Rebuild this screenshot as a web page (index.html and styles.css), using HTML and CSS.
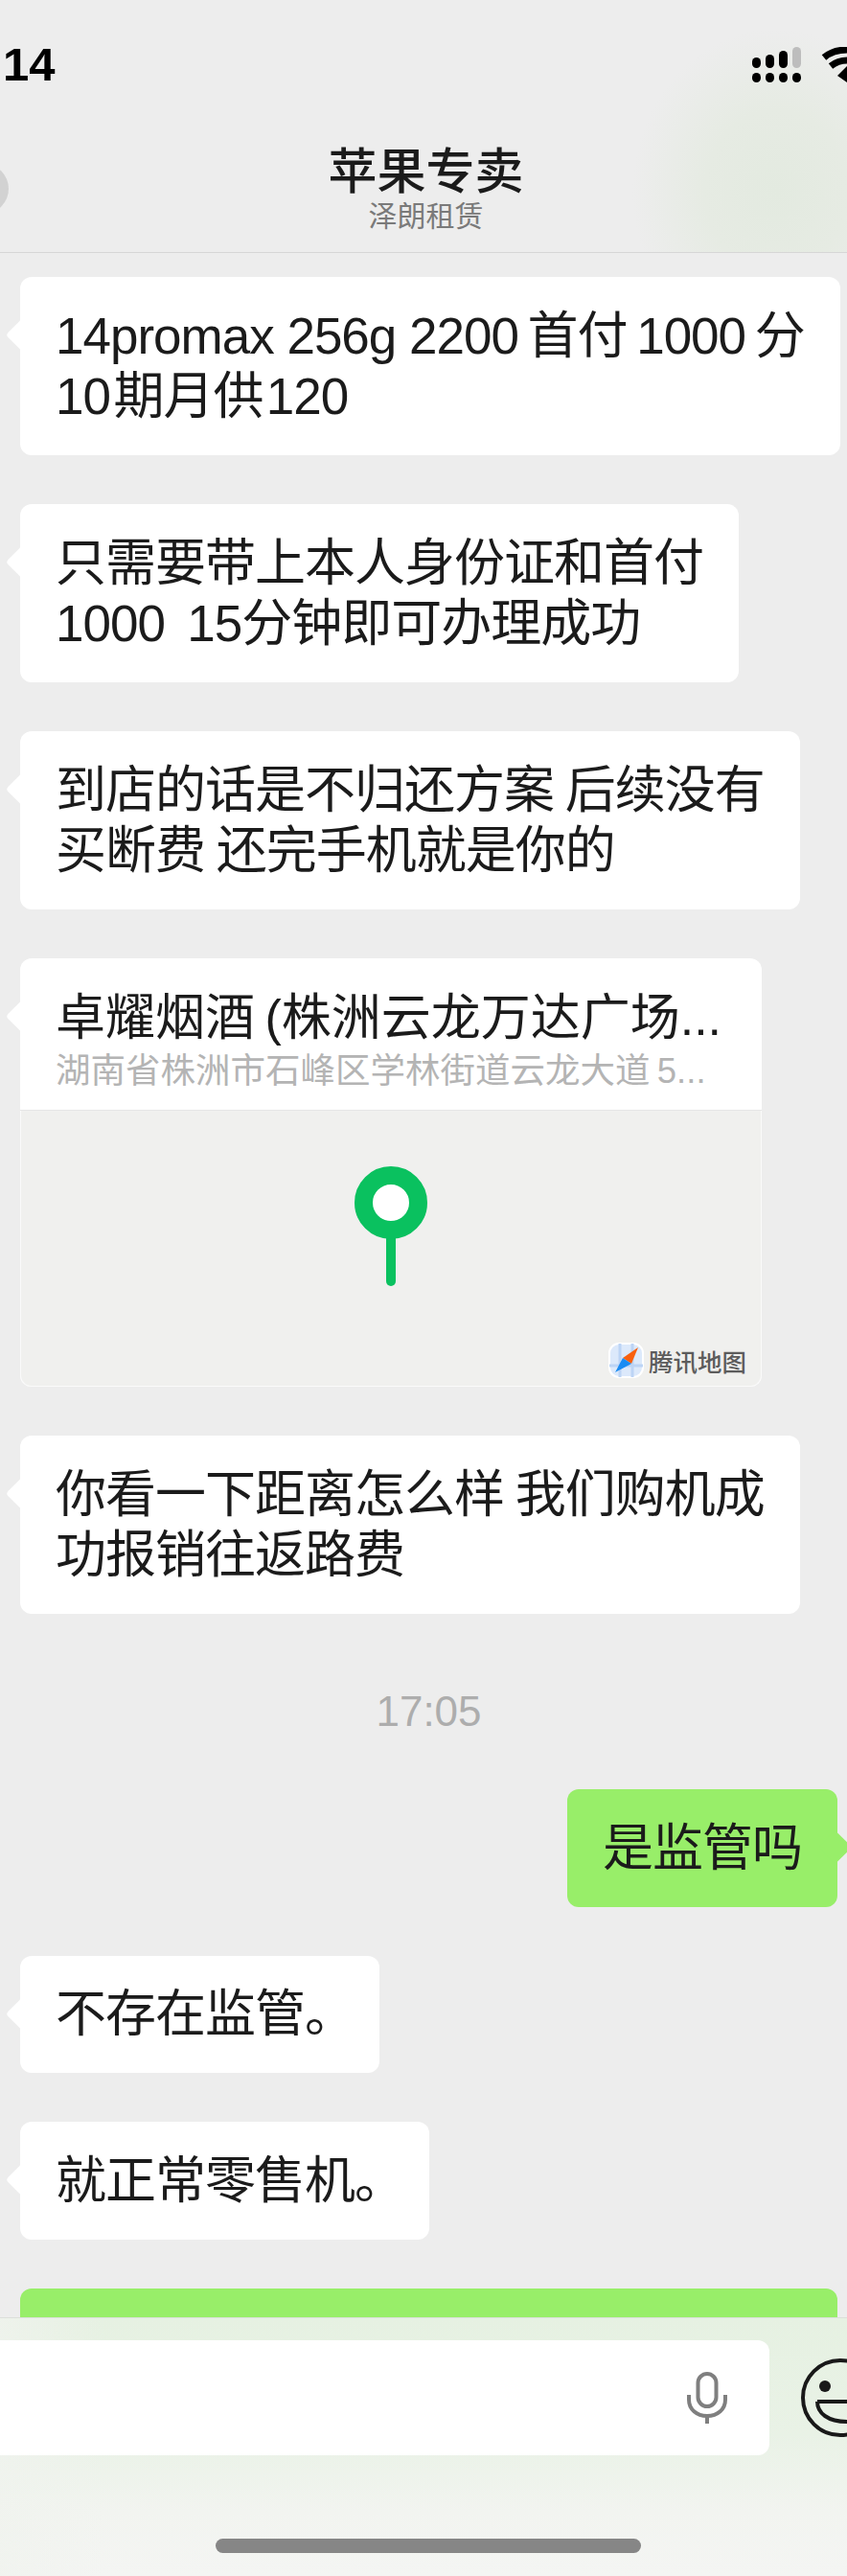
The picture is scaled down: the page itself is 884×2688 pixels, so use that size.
FILE: index.html
```html
<!DOCTYPE html>
<html lang="zh-CN">
<head>
    <meta charset="UTF-8">
    <meta name="viewport" content="width=device-width, initial-scale=1.0">
    <title>苹果专卖</title>
    <link rel="stylesheet" href="styles.css">
</head>
<body>
    <div id="phone">
        <div id="top">
            <div class="status">
                <span class="clock">14</span>
                <div class="status-icons">
                    <svg class="signal" width="51" height="37" viewBox="0 0 51 37">
                        <rect x="0" y="11" width="9" height="11" rx="4.5" fill="#000"/>
                        <rect x="14" y="8" width="9" height="14" rx="4.5" fill="#000"/>
                        <rect x="28" y="4" width="9" height="18" rx="4.5" fill="#000"/>
                        <rect x="42" y="0" width="9" height="22" rx="4.5" fill="#bdbdbd"/>
                        <rect x="0" y="27" width="9" height="10" rx="4.5" fill="#000"/>
                        <rect x="14" y="27" width="9" height="10" rx="4.5" fill="#000"/>
                        <rect x="28" y="27" width="9" height="10" rx="4.5" fill="#000"/>
                        <rect x="42" y="27" width="9" height="10" rx="4.5" fill="#000"/>
                    </svg>
                    <svg class="wifi" width="27" height="37" viewBox="0 0 27 37">
                        <path d="M3 11 C10 5 18 3 27 3" fill="none" stroke="#000" stroke-width="7"/>
                        <path d="M10 20 C15 16 20 14 27 14" fill="none" stroke="#000" stroke-width="7"/>
                        <path d="M17 30 L27 20 L27 37 Z" fill="#000"/>
                    </svg>
                </div>
            </div>
            <div class="title-block">
                <div class="title">苹果专卖</div>
                <div class="subtitle">泽朗租赁</div>
            </div>
        </div>

        <div id="chat">
            <div class="bubble roomy">14promax 256g 2200&thinsp;首付&thinsp;1000&thinsp;分<br>10&#8202;期月供&#8202;120</div>
            <div class="bubble">只需要带上本人身份证和首付<br>1000&nbsp; 15分钟即可办理成功</div>
            <div class="bubble">到店的话是不归还方案 后续没有<br>买断费 还完手机就是你的</div>

            <div class="location">
                <div class="location-text">
                    <div class="location-name">卓耀烟酒&thinsp;(株洲云龙万达广场...</div>
                    <div class="location-address">湖南省株洲市石峰区学林街道云龙大道&thinsp;5...</div>
                </div>
                <div class="map">
                    <svg class="pin" width="76" height="125" viewBox="0 0 76 125">
                        <rect x="33" y="70" width="10" height="55" rx="5" fill="#0ac15f"/>
                        <circle cx="38" cy="38" r="28.5" fill="#fff" stroke="#0ac15f" stroke-width="19"/>
                    </svg>
                    <div class="map-brand">
                        <svg width="37" height="37" viewBox="0 0 37 37">
                            <rect x="1" y="1" width="35" height="35" rx="10" fill="#dce9fb" stroke="#fff" stroke-width="2"/>
                            <path d="M12 1 V36 M25 1 V36 M1 24 H36" stroke="#bcd4f5" stroke-width="3"/>
                            <path d="M31 5 L24 22 L15 16 Z" fill="#f8600f"/>
                            <path d="M15 16 L24 22 L7 31 Z" fill="#1a8cf3"/>
                        </svg>
                        <span>腾讯地图</span>
                    </div>
                </div>
            </div>

            <div class="bubble">你看一下距离怎么样 我们购机成<br>功报销往返路费</div>
            <div class="time">17:05</div>
            <div class="bubble mine">是监管吗</div>
            <div class="bubble">不存在监管<span class="stop">。</span></div>
            <div class="bubble">就正常零售机<span class="stop">。</span></div>
            <div class="bubble mine wide"></div>
        </div>

        <div id="composer">
            <div class="input-row">
                <div class="input">
                    <svg width="42" height="54" viewBox="0 0 42 54">
                        <rect x="11.5" y="2" width="19" height="34" rx="9.5" fill="none" stroke="#7f7f7f" stroke-width="4"/>
                        <path d="M2 24 V29 C2 39 10 46 21 46 C32 46 40 39 40 29 V24" fill="none" stroke="#7f7f7f" stroke-width="4"/>
                        <rect x="19" y="46" width="4" height="8" fill="#7f7f7f"/>
                    </svg>
                </div>
                <svg class="smile" width="48" height="82" viewBox="0 0 48 82">
                    <circle cx="41" cy="41" r="39" fill="none" stroke="#191919" stroke-width="4"/>
                    <circle cx="25" cy="29" r="6" fill="#191919"/>
                    <path d="M17 45 H48 M17 45 C17 57 28 66 48 66" fill="none" stroke="#191919" stroke-width="4"/>
                </svg>
            </div>
            <div class="home-bar"></div>
        </div>
    </div>
</body>
</html>
```

FILE: styles.css
```css
* {
    box-sizing: border-box;
}

body {
    margin: 0;
    font-family: 'Liberation Sans', 'Noto Sans CJK SC', sans-serif;
    background-color: #ededed;
    color: #1b1b1b;
}

#phone {
    width: 884px;
    height: 2688px;
    display: flex;
    flex-direction: column;
    overflow: hidden;
}

#top {
    position: relative;
    height: 264px;
    flex-shrink: 0;
    border-bottom: 1px solid #d6d6d6;
    background: radial-gradient(ellipse 150px 170px at 810px 200px, #e3eae0 0%, #e6ebe3 50%, #ededed 100%);
    overflow: hidden;
}

/* grey circle peeking in at the left edge */
#top::before {
    content: '';
    position: absolute;
    left: -43px;
    top: 171px;
    width: 52px;
    height: 52px;
    border-radius: 50%;
    background-color: #d2d2d2;
}

.status {
    display: flex;
    justify-content: space-between;
    align-items: flex-start;
    padding: 49px 0 0 3px;
    height: 142px;
}

.clock {
    font-size: 49px;
    line-height: 36px;
    font-weight: 700;
    color: #000;
}

.status-icons {
    display: flex;
    gap: 21px;
}

.title-block {
    text-align: center;
    margin-top: 10px;
    padding-left: 5px;
}

.title {
    font-size: 51px;
    line-height: 56px;
    font-weight: 500;
}

.subtitle {
    font-size: 30px;
    line-height: 36px;
    color: #7a7a7a;
}

#chat {
    flex: 1;
    min-height: 0;
    overflow: hidden;
    display: flex;
    flex-direction: column;
    align-items: flex-start;
    gap: 51px;
    padding: 25px 10px 0 21px;
}

.bubble {
    position: relative;
    flex-shrink: 0;
    padding: 29.5px 37px;
    font-size: 53px;
    line-height: 63.5px;
    letter-spacing: -1px;
    word-spacing: -2px;
    background-color: #fff;
    border-radius: 12px;
    white-space: nowrap;
}

.bubble.roomy {
    word-spacing: 0;
}

.stop {
    letter-spacing: -12px;
}

/* little tail beside the first line */
.bubble::before,
.location::before {
    content: '';
    position: absolute;
    left: -10px;
    top: 48px;
    width: 25px;
    height: 25px;
    border-radius: 4px;
    background-color: #fff;
    transform: rotate(45deg);
}

.bubble.mine {
    align-self: flex-end;
    background-color: #98ee69;
}

.bubble.mine::before {
    left: auto;
    right: -10px;
    background-color: #98ee69;
}

.bubble.wide {
    width: 100%;
    height: 122px;
}

.time {
    flex-shrink: 0;
    align-self: center;
    padding: 26px 0 5px;
    font-size: 44px;
    line-height: 50px;
    color: #adadad;
}

.location {
    position: relative;
    flex-shrink: 0;
    width: 774px;
    height: 447px;
    display: flex;
    flex-direction: column;
    background-color: #fff;
    border-radius: 12px;
}

.location-text {
    position: relative;
    height: 159px;
    padding: 30px 30px 0 37px;
    border-bottom: 1px solid #e6e6e6;
}

.location-name {
    font-size: 52px;
    line-height: 64px;
    white-space: nowrap;
}

.location-address {
    font-size: 36.5px;
    line-height: 48px;
    color: #b4b4b4;
    white-space: nowrap;
}

.map {
    position: relative;
    flex: 1;
    background-color: #f0f0ee;
    border: 1px solid #fafafa;
    border-top: none;
    border-radius: 0 0 12px 12px;
}

.pin {
    position: absolute;
    left: 348px;
    top: 58px;
}

.map-brand {
    position: absolute;
    right: 15px;
    bottom: 8px;
    display: flex;
    align-items: center;
    gap: 5px;
    font-size: 25.5px;
    font-weight: 500;
    color: #5c5c5c;
}

#composer {
    height: 270px;
    flex-shrink: 0;
    display: flex;
    flex-direction: column;
    align-items: center;
    border-top: 1px solid #dcdfda;
    background:
        linear-gradient(90deg, rgba(240, 243, 238, 0.8) 0, rgba(240, 243, 238, 0) 110px),
        linear-gradient(180deg, #e6f1e2 0%, #e9f2e6 45%, #f2f4f0 75%, #f4f5f3 100%);
}

.input-row {
    width: 100%;
    height: 120px;
    margin-top: 23px;
    display: flex;
    align-items: center;
    gap: 33px;
}

.input {
    width: 803px;
    height: 120px;
    flex-shrink: 0;
    display: flex;
    align-items: center;
    justify-content: flex-end;
    padding-right: 44px;
    background-color: #fff;
    border-radius: 0 12px 12px 0;
}

.smile {
    flex-shrink: 0;
}

.home-bar {
    width: 444px;
    height: 15px;
    margin-top: 87px;
    margin-left: 10px;
    border-radius: 8px;
    background-color: #868686;
}
```
